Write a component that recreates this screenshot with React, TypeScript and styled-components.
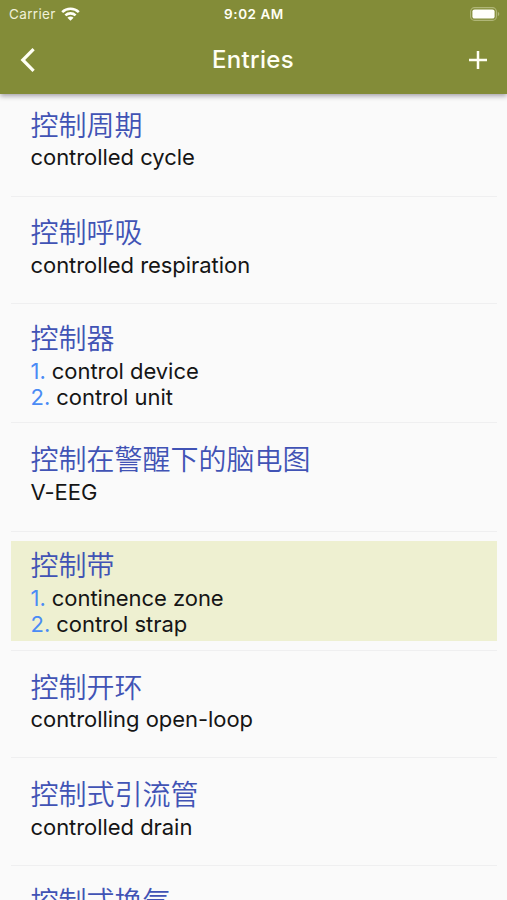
import React from 'react';
import styled, { createGlobalStyle } from 'styled-components';

const GlobalStyle = createGlobalStyle`
  * { box-sizing: border-box; }
  body {
    margin: 0;
    background: #fafafa;
    font-family: Inter, "Noto Sans CJK SC", sans-serif;
  }
`;

const Screen = styled.div`
  height: 900px;
  display: flex;
  flex-direction: column;
  overflow: hidden;
  background: #fafafa;
`;

const Header = styled.header`
  flex: none;
  height: 94px;
  background: #838c38;
  color: #fffff4;
  box-shadow: 0 2px 5px rgba(40, 30, 50, 0.42);
  z-index: 1;
`;

const StatusBar = styled.div`
  height: 27px;
  padding: 0 7px 0 9px;
  display: grid;
  grid-template-columns: 1fr auto 1fr;
  align-items: center;
`;

const Carrier = styled.div`
  display: flex;
  align-items: center;
  gap: 5px;
  font-size: 13.5px;
  letter-spacing: 0.35px;
  color: #f0f1d8;
`;

const Clock = styled.div`
  margin-right: 1px;
  font-size: 13.5px;
  font-weight: 600;
  letter-spacing: 0.55px;
`;

const BatterySlot = styled.div`
  display: flex;
  justify-content: flex-end;
`;

const NavBar = styled.div`
  height: 65px;
  padding: 0 20px 0 19px;
  display: grid;
  grid-template-columns: 1fr auto 1fr;
  align-items: center;
`;

const NavButton = styled.button<{ $end?: boolean }>`
  justify-self: ${(p) => (p.$end ? 'end' : 'start')};
  display: flex;
  padding: 0;
  border: 0;
  background: none;
  color: inherit;
`;

const Title = styled.h1`
  margin: 0;
  font-size: 24px;
  line-height: 30px;
  font-weight: 550;
  letter-spacing: 0.35px;
`;

const List = styled.ul`
  list-style: none;
  margin: 0;
  padding: 0 10px 0 11px;
`;

const Row = styled.li<{ $height: number; $top: number }>`
  height: ${(p) => p.$height}px;
  padding-top: ${(p) => p.$top}px;
  border-bottom: 1px solid #efeff0;
`;

const Tile = styled.div<{ $selected?: boolean }>`
  height: 100px;
  padding: 4px 0 0 19.5px;
  background: ${(p) => (p.$selected ? '#eef0d1' : 'transparent')};
`;

const Term = styled.div`
  font-family: "Noto Sans CJK SC", sans-serif;
  font-size: 28px;
  font-weight: 350;
  line-height: 38px;
  color: #4153b5;
  white-space: nowrap;
`;

const Meanings = styled.div<{ $gap: number }>`
  padding-top: ${(p) => p.$gap}px;
`;

const Meaning = styled.div`
  font-size: 22px;
  line-height: 26px;
  letter-spacing: -0.05px;
  color: #151515;
  white-space: nowrap;
`;

const Index = styled.span`
  color: #4a8bf5;
`;

type Entry = {
  term: string;
  meanings: string[];
  height: number;
  top: number;
  gap?: number;
  selected?: boolean;
};

const entries: Entry[] = [
  { term: '控制周期', meanings: ['controlled cycle'], height: 103, top: 7, gap: 1 },
  { term: '控制呼吸', meanings: ['controlled respiration'], height: 107, top: 11 },
  { term: '控制器', meanings: ['control device', 'control unit'], height: 119, top: 10 },
  { term: '控制在警醒下的脑电图', meanings: ['V-EEG'], height: 109, top: 12 },
  { term: '控制带', meanings: ['continence zone', 'control strap'], height: 119, top: 9, selected: true },
  { term: '控制开环', meanings: ['controlling open-loop'], height: 107, top: 12, gap: 1 },
  { term: '控制式引流管', meanings: ['controlled drain'], height: 108, top: 12 },
  { term: '控制式换气', meanings: [], height: 107, top: 11 },
];

const WifiIcon = () => (
  <svg width="19" height="14" viewBox="0 0 19 14" fill="none" stroke="#fffff8" strokeWidth="2.6">
    <path d="M1.2 5.1C5.8.7 13.2.7 17.8 5.1" />
    <path d="M4.4 8.4c2.8-2.7 7.4-2.7 10.2 0" />
    <path d="M9.5 13.8 6.4 10.8c1.7-1.6 4.5-1.6 6.2 0Z" fill="#fffff8" stroke="none" />
  </svg>
);

const BatteryIcon = () => (
  <svg width="30" height="14" viewBox="0 0 30 14">
    <rect x="0.6" y="0.6" width="25.8" height="12.8" rx="4" fill="none" stroke="#b0b678" strokeWidth="1.1" />
    <rect x="2.4" y="2.4" width="22.2" height="9.2" rx="2.2" fill="#fffffa" />
    <path d="M27.8 4.8c2 .8 2 3.6 0 4.4Z" fill="#b0b678" />
  </svg>
);

const BackIcon = () => (
  <svg width="18" height="24" viewBox="0 0 18 24" fill="none" stroke="currentColor" strokeWidth="3.2">
    <path d="M14.6 1.2 3.8 12l10.8 10.8" />
  </svg>
);

const PlusIcon = () => (
  <svg width="18" height="18" viewBox="0 0 18 18" fill="none" stroke="currentColor" strokeWidth="2.5">
    <path d="M9 0v18M0 9h18" />
  </svg>
);

export default function App() {
  return (
    <Screen>
      <GlobalStyle />
      <Header>
        <StatusBar>
          <Carrier>
            <span>Carrier</span>
            <WifiIcon />
          </Carrier>
          <Clock>9:02 AM</Clock>
          <BatterySlot>
            <BatteryIcon />
          </BatterySlot>
        </StatusBar>
        <NavBar>
          <NavButton aria-label="Back">
            <BackIcon />
          </NavButton>
          <Title>Entries</Title>
          <NavButton $end aria-label="Add">
            <PlusIcon />
          </NavButton>
        </NavBar>
      </Header>
      <List>
        {entries.map((entry) => (
          <Row key={entry.term} $height={entry.height} $top={entry.top}>
            <Tile $selected={entry.selected}>
              <Term>{entry.term}</Term>
              <Meanings $gap={entry.gap ?? 2}>
                {entry.meanings.map((meaning, i) => (
                  <Meaning key={meaning}>
                    {entry.meanings.length > 1 && <Index>{i + 1}. </Index>}
                    {meaning}
                  </Meaning>
                ))}
              </Meanings>
            </Tile>
          </Row>
        ))}
      </List>
    </Screen>
  );
}
